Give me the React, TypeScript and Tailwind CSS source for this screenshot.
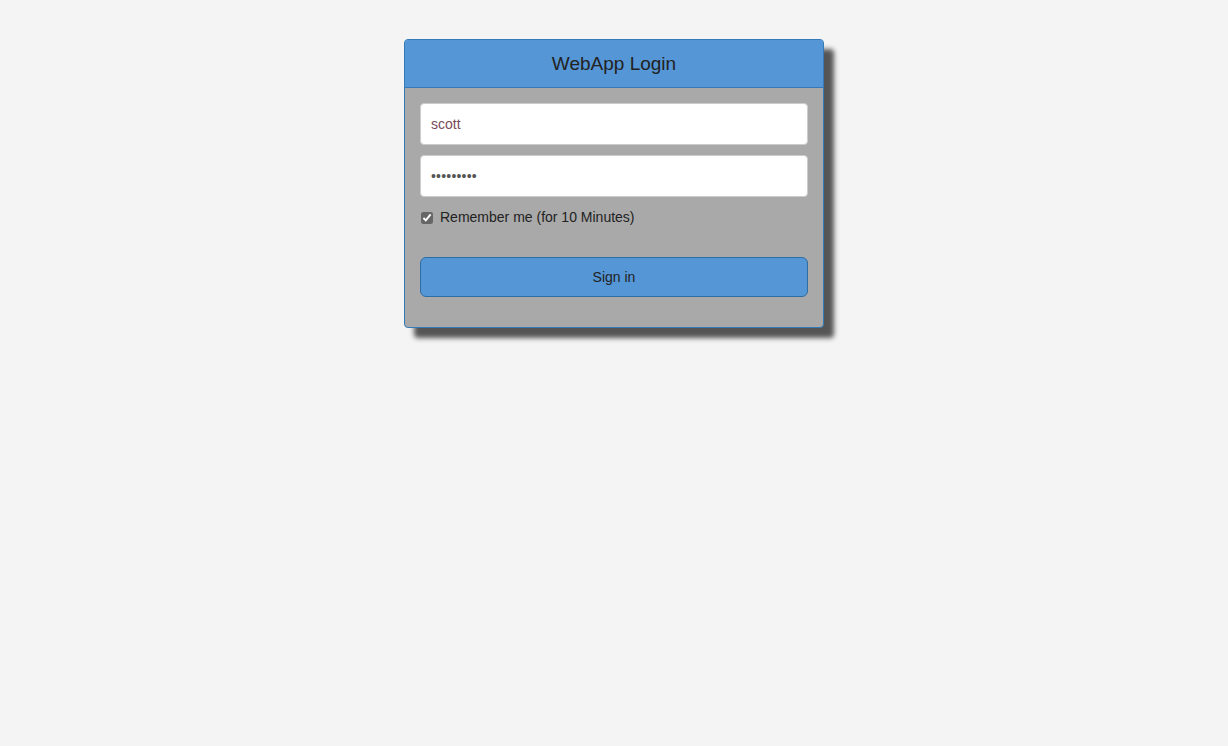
export default function App() {
  return (
    <div className="min-h-[746px] bg-[#f4f4f4] pt-[39px] font-['Liberation_Sans',Arial,sans-serif]">
      <div className="mx-auto w-[420px] rounded-[4px] border border-[#337ab7] bg-[#a9a9a9] shadow-[10px_10px_5px_#555]">
        <div className="flex h-[48px] items-center justify-center border-b border-[#337ab7] bg-[#5596d6] pt-[2px] text-[19px] text-[#222]">
          WebApp Login
        </div>
        <div className="px-[15px] pb-[30px] pt-[15px]">
          <div className="flex h-[42px] items-center rounded-[4px] border border-[#ccc] bg-white px-[10px] text-[14px] text-[#7a4a5a]">
            scott
          </div>
          <div className="mt-[10px] flex h-[42px] items-center rounded-[4px] border border-[#ccc] bg-white px-[10px] text-[14px] tracking-[0.2px] text-[#555]">
            •••••••••
          </div>
          <label className="mt-[10px] flex items-center text-[14px] text-[#222]">
            <input type="checkbox" defaultChecked className="ml-px h-[12px] w-[12px] accent-[#666]" />
            <span className="ml-[7px]">Remember me (for 10 Minutes)</span>
          </label>
          <button className="mt-[29px] flex h-[40px] w-full items-center justify-center rounded-[6px] border border-[#2e6da4] bg-[#5596d6] text-[14px] text-[#222]">
            Sign in
          </button>
        </div>
      </div>
    </div>
  );
}
